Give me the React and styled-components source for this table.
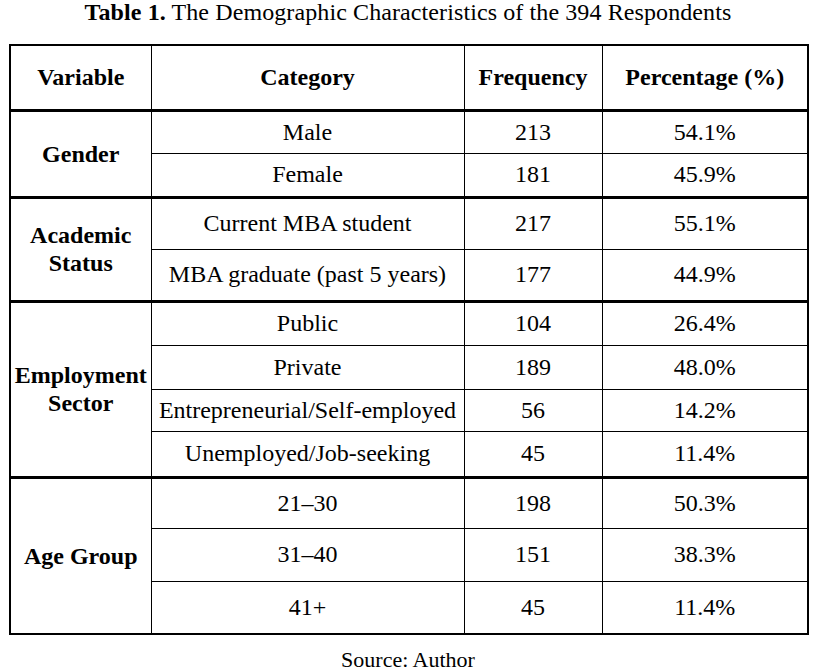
import styled, { createGlobalStyle } from 'styled-components'

const serif = `"Liberation Serif", "Times New Roman", serif`

const Global = createGlobalStyle`
    html, body {
        margin: 0;
        padding: 0;
        background: #fff;
    }
    body {
        font-family: ${serif};
        color: #000;
    }
`

const Page = styled.div`
    width: 816px;
    height: 672px;
    padding: 0 9px;
    box-sizing: border-box;
    overflow: hidden;
    font-family: ${serif};
`

const Caption = styled.div`
    font-family: ${serif};
    text-align: center;
    font-size: 24px;
    line-height: 24px;
    height: 44px;
    letter-spacing: 0.1px;

    & b {
        font-family: ${serif};
        font-weight: bold;
    }
`

const Table = styled.table`
    width: 798px;
    border-collapse: collapse;
    table-layout: fixed;
    border: 2px solid #000;
    font-family: ${serif};
    font-size: 24px;
`

const Col = styled.col`
    width: ${p => p.w}px;
`

const Row = styled.tr`
    height: ${p => p.h}px;
    border-top: ${p => (p.group ? '3px' : '1px')} solid #000;
`

const Head = styled.th`
    font-family: ${serif};
    font-size: 24px;
    border: 1px solid #000;
    border-bottom: 3px solid #000;
    font-weight: bold;
    padding: 0 2px;
    text-align: center;
    vertical-align: middle;
`

const Group = styled.td`
    font-family: ${serif};
    font-size: 24px;
    border: 1px solid #000;
    font-weight: bold;
    line-height: 28px;
    padding: 0 2px;
    text-align: center;
    vertical-align: middle;
`

const Cell = styled.td`
    font-family: ${serif};
    font-size: 24px;
    border: 1px solid #000;
    padding: 0 2px;
    text-align: center;
    vertical-align: middle;
    white-space: nowrap;
`

const Source = styled.div`
    font-family: ${serif};
    text-align: center;
    font-size: 22px;
    margin-top: 12px;
`

const groups = [
    {
        name: ['Gender'],
        rows: [
            ['Male', '213', '54.1%', 43],
            ['Female', '181', '45.9%', 44],
        ],
    },
    {
        name: ['Academic', 'Status'],
        rows: [
            ['Current MBA student', '217', '55.1%', 52],
            ['MBA graduate (past 5 years)', '177', '44.9%', 52],
        ],
    },
    {
        name: ['Employment', 'Sector'],
        rows: [
            ['Public', '104', '26.4%', 44],
            ['Private', '189', '48.0%', 44],
            ['Entrepreneurial/Self-employed', '56', '14.2%', 42],
            ['Unemployed/Job-seeking', '45', '11.4%', 46],
        ],
    },
    {
        name: ['Age Group'],
        rows: [
            ['21–30', '198', '50.3%', 51],
            ['31–40', '151', '38.3%', 53],
            ['41+', '45', '11.4%', 53],
        ],
    },
]

const App = () => {
    return (
        <Page>
            <Global />
            <Caption>
                <b>Table 1.</b> The Demographic Characteristics of the 394 Respondents
            </Caption>
            <Table>
                <colgroup>
                    <Col w={141} />
                    <Col w={313} />
                    <Col w={138} />
                    <Col w={206} />
                </colgroup>
                <thead>
                    <Row h={65}>
                        <Head>Variable</Head>
                        <Head>Category</Head>
                        <Head>Frequency</Head>
                        <Head>Percentage (%)</Head>
                    </Row>
                </thead>
                <tbody>
                    {groups.map((g) =>
                        g.rows.map(([cat, freq, pct, h], i) => (
                            <Row key={g.name.join() + i} h={h} group={i === 0}>
                                {i === 0 && (
                                    <Group rowSpan={g.rows.length}>
                                        {g.name.map((n) => <div key={n}>{n}</div>)}
                                    </Group>
                                )}
                                <Cell>{cat}</Cell>
                                <Cell>{freq}</Cell>
                                <Cell>{pct}</Cell>
                            </Row>
                        ))
                    )}
                </tbody>
            </Table>
            <Source>Source: Author</Source>
        </Page>
    )
}

export default App
